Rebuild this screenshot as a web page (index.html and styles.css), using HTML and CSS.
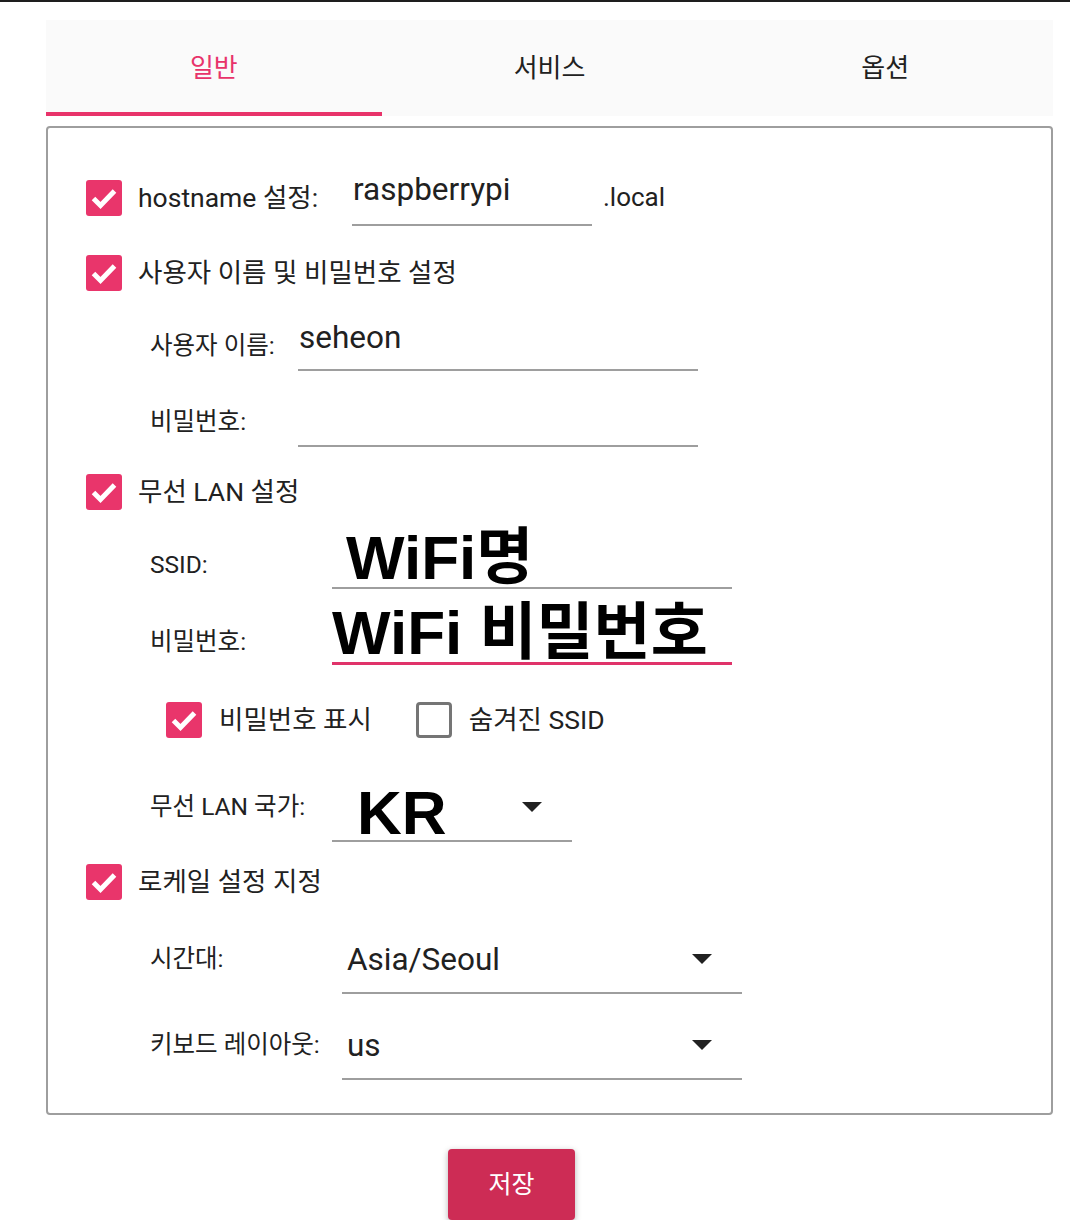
FILE: index.html
```html
<!DOCTYPE html>
<html lang="ko">
<head>
<meta charset="utf-8">
<title>설정</title>
<link rel="stylesheet" href="styles.css">
</head>
<body>
<div class="topline"></div>
<div class="page">
  <nav class="tabs">
    <div class="tab active">일반</div>
    <div class="tab">서비스</div>
    <div class="tab">옵션</div>
  </nav>

  <section class="panel">
    <div class="row host">
      <svg class="cb" viewBox="0 0 36 36"><rect width="36" height="36" rx="3" class="cb-bg"/><path d="M7.5 18.5 L14.5 25.5 L28.5 11" class="cb-mark"/></svg>
      <span class="label-main host-label">hostname 설정:</span>
      <div class="field f-host"><span class="val">raspberrypi</span></div>
      <span class="suffix">.local</span>
    </div>

    <div class="row check r-user">
      <svg class="cb" viewBox="0 0 36 36"><rect width="36" height="36" rx="3" class="cb-bg"/><path d="M7.5 18.5 L14.5 25.5 L28.5 11" class="cb-mark"/></svg>
      <span class="label-main">사용자 이름 및 비밀번호 설정</span>
    </div>

    <div class="group g-user">
      <div class="row sub r-name">
        <span class="label-sub">사용자 이름:</span>
        <div class="field f-text"><span class="val">seheon</span></div>
      </div>
      <div class="row sub r-pass">
        <span class="label-sub">비밀번호:</span>
        <div class="field f-text"><span class="val"></span></div>
      </div>
    </div>

    <div class="row check r-wlan">
      <svg class="cb" viewBox="0 0 36 36"><rect width="36" height="36" rx="3" class="cb-bg"/><path d="M7.5 18.5 L14.5 25.5 L28.5 11" class="cb-mark"/></svg>
      <span class="label-main">무선 LAN 설정</span>
    </div>

    <div class="group g-wifi">
      <div class="row sub r-ssid">
        <span class="label-sub drop">SSID:</span>
        <div class="field f-big f-ssid"><span class="val">WiFi명</span></div>
      </div>
      <div class="row sub r-wpass">
        <span class="label-sub drop">비밀번호:</span>
        <div class="field f-big f-wpass focused"><span class="val">WiFi 비밀번호</span></div>
      </div>

      <div class="row opts">
        <svg class="cb" viewBox="0 0 36 36"><rect width="36" height="36" rx="3" class="cb-bg"/><path d="M7.5 18.5 L14.5 25.5 L28.5 11" class="cb-mark"/></svg>
        <span class="label-opt">비밀번호 표시</span>
        <span class="cb-off"></span>
        <span class="label-opt">숨겨진 SSID</span>
      </div>

      <div class="row sub r-country">
        <span class="label-sub lift">무선 LAN 국가:</span>
        <div class="field select f-country"><span class="val">KR</span><span class="arrow"></span></div>
      </div>
    </div>

    <div class="row check r-locale">
      <svg class="cb" viewBox="0 0 36 36"><rect width="36" height="36" rx="3" class="cb-bg"/><path d="M7.5 18.5 L14.5 25.5 L28.5 11" class="cb-mark"/></svg>
      <span class="label-main">로케일 설정 지정</span>
    </div>

    <div class="group g-locale">
      <div class="row sub r-tz">
        <span class="label-sub lift">시간대:</span>
        <div class="field select f-sel"><span class="val">Asia/Seoul</span><span class="arrow"></span></div>
      </div>
      <div class="row sub r-kb">
        <span class="label-sub lift">키보드 레이아웃:</span>
        <div class="field select f-sel"><span class="val">us</span><span class="arrow"></span></div>
      </div>
    </div>
  </section>

  <button class="save" type="button">저장</button>
</div>
</body>
</html>
```

FILE: styles.css
```css
* { box-sizing: border-box; }

html, body {
  margin: 0;
  padding: 0;
  background: #ffffff;
}

body {
  font-family: Roboto, "Noto Sans CJK KR", sans-serif;
  color: #212121;
}

.topline {
  height: 2px;
  background: #1e1e1e;
}

.page {
  padding: 18px 17px 0 46px;
}

/* tabs */
.tabs {
  display: flex;
  height: 96px;
  background: #fafafa;
}

.tab {
  flex: 1;
  display: flex;
  align-items: center;
  justify-content: center;
  font-size: 26px;
  color: #212121;
  padding-bottom: 2px;
  border-bottom: 4px solid transparent;
}

.tab.active {
  color: #e8336a;
  border-bottom-color: #e8336a;
}

/* panel */
.panel {
  margin-top: 10px;
  border: 2px solid #9e9e9e;
  border-radius: 4px;
  padding: 42px 38px 33px;
  display: flex;
  flex-direction: column;
}

.row {
  display: flex;
  align-items: center;
}

.cb {
  width: 36px;
  height: 36px;
  flex: none;
}

.cb-bg { fill: #e9356b; }

.cb-mark {
  fill: none;
  stroke: #ffffff;
  stroke-width: 5;
}

.cb-off {
  width: 36px;
  height: 36px;
  flex: none;
  border: 3px solid #757575;
  border-radius: 4px;
}

.label-main {
  font-size: 26.5px;
  margin-left: 16px;
  padding-bottom: 5px;
  white-space: nowrap;
}

.host { height: 56px; }

.host-label { width: 214px; }

.suffix {
  font-size: 26px;
  margin-left: 11px;
  padding-bottom: 2px;
}

.check { height: 36px; }
.r-user { margin-top: 29px; }
.r-wlan { margin-top: 27px; }
.r-locale { margin-top: 22px; }

/* fields */
.field {
  border-bottom: 2px solid #9e9e9e;
  flex: none;
}

.val {
  display: block;
  font-size: 31.5px;
  line-height: 40px;
  color: #212121;
  white-space: nowrap;
}

.f-host {
  width: 240px;
  height: 56px;
}

.f-host .val { padding-left: 1px; }

.group { display: flex; flex-direction: column; }

.sub { padding-left: 64px; }

.label-sub {
  font-size: 24.5px;
  flex: none;
  white-space: nowrap;
}

.label-sub.drop { padding-top: 10px; }
.label-sub.lift { padding-bottom: 19px; }

.g-user .label-sub { width: 148px; }
.g-wifi .label-sub { width: 182px; }
.g-locale .label-sub { width: 192px; }

.f-text {
  width: 400px;
  height: 56px;
  padding-top: 3px;
}

.f-text .val { padding-left: 1px; }

.r-name { margin-top: 24px; }
.r-pass { margin-top: 20px; }

/* big overlay values */
.f-big .val,
.f-country .val {
  font-family: "Liberation Sans", "Noto Sans CJK KR", sans-serif;
  font-weight: 700;
  font-size: 62px;
  line-height: 58px;
  color: #000000;
}

.f-ssid {
  width: 400px;
  height: 60px;
}

.f-ssid .val { padding-left: 14px; }

.f-wpass {
  width: 400px;
  height: 61px;
}

.focused {
  border-bottom: 3px solid #e0336a;
}

.r-ssid { margin-top: 19px; }
.r-wpass { margin-top: 15px; }

.opts {
  margin-top: 37px;
  padding-left: 80px;
  height: 36px;
}

.label-opt {
  font-size: 26.5px;
  margin-left: 17px;
  margin-right: 44px;
  padding-bottom: 5px;
  white-space: nowrap;
}

.label-opt:last-child { margin-right: 0; }

/* selects */
.select {
  display: flex;
  justify-content: space-between;
  align-items: flex-start;
}

.arrow {
  flex: none;
  width: 0;
  height: 0;
  margin-top: 16px;
  margin-right: 30px;
  border-left: 10px solid transparent;
  border-right: 10px solid transparent;
  border-top: 10px solid #212121;
}

.f-country {
  width: 240px;
  height: 56px;
}

.f-country .val {
  padding-left: 25px;
  line-height: 54px;
}

.r-country { margin-top: 48px; }

.f-sel {
  width: 400px;
  height: 56px;
  padding-top: 2px;
}

.f-sel .val { padding-left: 5px; }
.f-sel .arrow { margin-top: 14px; }

.r-tz { margin-top: 38px; }
.r-kb { margin-top: 30px; }

/* save button */
.save {
  display: flex;
  align-items: center;
  justify-content: center;
  margin: 34px 0 0 402px;
  width: 127px;
  height: 71px;
  padding: 0 0 5px;
  border: none;
  border-radius: 4px;
  background: #cd2c55;
  color: #ffffff;
  font-family: Roboto, "Noto Sans CJK KR", sans-serif;
  font-size: 25px;
  box-shadow: 0 2px 6px rgba(0, 0, 0, 0.3);
}
```
